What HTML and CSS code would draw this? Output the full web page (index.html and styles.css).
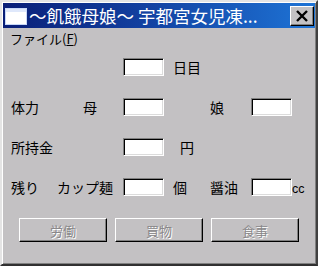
FILE: index.html
```html
<!DOCTYPE html>
<html lang="ja">
<head>
<meta charset="utf-8">
<link rel="stylesheet" href="styles.css">
</head>
<body>
<div class="window">
  <div class="titlebar">
    <svg class="app-icon" width="22" height="17" viewBox="0 0 22 17">
      <rect x="0.5" y="0.5" width="21" height="16" fill="#ffffff" stroke="#c8d8f8"/>
      <rect x="1" y="1" width="20" height="3" fill="#dfe8fb"/>
    </svg>
    <span class="title">～飢餓母娘～ 宇都宮女児凍...</span>
    <button class="close" type="button">
      <svg width="14" height="12" viewBox="0 0 14 12"><path d="M2 1 L12 11 M12 1 L2 11" stroke="#000" stroke-width="2.4"/></svg>
    </button>
  </div>
  <div class="menubar"><span class="menu">ファイル(<u>F</u>)</span></div>
  <div class="form">
    <span class="c1"></span><span class="c2"></span>
    <input class="field" type="text"><span class="unit u9">日目</span>
    <span></span><span></span><span></span>

    <span class="label">体力</span><span class="label o26">母</span>
    <input class="field" type="text"><span></span>
    <span class="label">娘</span><input class="field" type="text"><span></span>

    <span class="label">所持金</span><span></span>
    <input class="field" type="text"><span class="unit u16">円</span>
    <span></span><span></span><span></span>

    <span class="label">残り</span><span class="label o1">カップ麺</span>
    <input class="field" type="text"><span class="unit u9">個</span>
    <span class="label">醤油</span><input class="field" type="text"><span class="cc">cc</span>
  </div>
  <div class="buttons">
    <button class="btn" type="button" disabled>労働</button>
    <button class="btn" type="button" disabled>買物</button>
    <button class="btn" type="button" disabled>食事</button>
  </div>
</div>
</body>
</html>
```

FILE: styles.css
```css
html, body {
  margin: 0;
  padding: 0;
  background: #c3c1c3;
}
body {
  font-family: "Noto Sans CJK JP", "Noto Sans", sans-serif;
  color: #000;
}
.window {
  width: 318px;
  height: 266px;
  box-sizing: border-box;
  background: #c3c1c3;
  border-style: solid;
  border-width: 2px 2px 2px 2px;
  border-color: #e4e4e4 #404040 #303030 #e4e4e4;
  box-shadow: inset 1px 1px #ffffff, inset -1px -1px #808080;
  padding: 1px;
  display: flex;
  flex-direction: column;
}
.titlebar {
  height: 25px;
  display: flex;
  align-items: center;
  background: linear-gradient(to right, #0a1f78 0%, #1240a0 45%, #1e74d6 100%);
  padding: 0 0 0 2px;
}
.app-icon {
  flex: none;
  margin-top: 1px;
}
.title {
  flex: 1;
  color: #fff;
  font-size: 17.5px;
  line-height: 25px;
  margin-left: 2px;
  white-space: nowrap;
  overflow: hidden;
}
.close {
  flex: none;
  width: 24px;
  height: 20px;
  margin-right: 1px;
  padding: 0;
  display: flex;
  align-items: center;
  justify-content: center;
  background: #c3c1c3;
  border: 1px solid;
  border-color: #ffffff #000000 #000000 #ffffff;
  box-shadow: inset -1px -1px #808080;
}
.menubar {
  height: 22px;
  display: flex;
  align-items: center;
  padding-left: 7px;
}
.menu {
  font-size: 13px;
  line-height: 16px;
}
.form {
  display: grid;
  grid-template-columns: 46px 66px 41px 46px 41px 40px auto;
  grid-auto-rows: 18px;
  row-gap: 22px;
  padding-left: 8px;
  margin-top: 8px;
  align-items: center;
}
.label, .unit {
  font-size: 14px;
  line-height: 18px;
  white-space: nowrap;
}
.o26 { padding-left: 26px; }
.o1 { padding-left: 0; }
.u9 { padding-left: 9px; }
.u16 { padding-left: 16px; }
.cc {
  font-family: "Liberation Sans", sans-serif;
  font-size: 12.5px;
  line-height: 18px;
  padding-left: 1px;
  padding-top: 3px;
}
.field {
  width: 41px;
  height: 18px;
  box-sizing: border-box;
  margin: 0;
  padding: 0;
  background: #fff;
  border: 1px solid;
  border-color: #808080 #ffffff #ffffff #808080;
  box-shadow: inset 1px 1px #000, inset -1px -1px #dcdcdc;
  outline: none;
}
.buttons {
  display: flex;
  gap: 8px;
  padding-left: 16px;
  margin-top: 22px;
}
.btn {
  width: 88px;
  height: 24px;
  padding: 0;
  margin: 0;
  font-family: "Noto Sans CJK JP", sans-serif;
  font-size: 13px;
  color: #8a888a;
  text-shadow: 1px 1px #ffffff;
  background: #c3c1c3;
  border: 1px solid;
  border-color: #ffffff #000000 #000000 #ffffff;
  box-shadow: inset -1px -1px #808080;
}
```
